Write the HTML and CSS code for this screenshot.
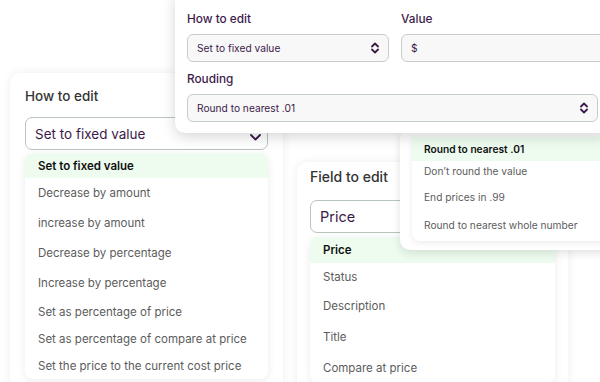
FILE: index.html
```html
<!DOCTYPE html>
<html lang="en">
<head>
  <meta charset="UTF-8">
  <meta name="viewport" content="width=device-width, initial-scale=1.0">
  <title>Bulk price editor</title>
  <link rel="stylesheet" href="styles.css">
</head>
<body>
  <div class="canvas">

    <!-- how to edit card -->
    <div class="card card-how">
      <p class="label">How to edit</p>
      <div class="select">
        <span>Set to fixed value</span>
        <svg class="chev" width="11" height="7" viewBox="0 0 11 7"><polyline points="1,1 5.5,5.5 10,1"/></svg>
      </div>
      <ul class="list">
        <li class="active">Set to fixed value</li>
        <li class="tall">Decrease by amount</li>
        <li class="tall">increase by amount</li>
        <li class="tall">Decrease by percentage</li>
        <li class="tall">Increase by percentage</li>
        <li>Set as percentage of price</li>
        <li>Set as percentage of compare at price</li>
        <li>Set the price to the current cost price</li>
      </ul>
    </div>

    <!-- field card -->
    <div class="card card-field">
      <p class="label">Field to edit</p>
      <div class="select">
        <span>Price</span>
      </div>
      <ul class="list">
        <li class="active">Price</li>
        <li>Status</li>
        <li class="tall">Description</li>
        <li class="tall">Title</li>
        <li class="tall">Compare at price</li>
      </ul>
    </div>

    <!-- rounding dropdown -->
    <div class="card card-round">
      <ul class="list">
        <li class="active">Round to nearest .01</li>
        <li class="short">Don’t round the value</li>
        <li class="tall">End prices in .99</li>
        <li class="last">Round to nearest whole number</li>
      </ul>
    </div>

    <!-- compact form -->
    <div class="card card-form">
      <div class="form-row">
        <div class="field">
          <p class="label">How to edit</p>
          <div class="select">
            <span>Set to fixed value</span>
            <svg class="updown" width="8" height="12" viewBox="0 0 8 12"><polyline points="1,4.5 4,1.5 7,4.5"/><polyline points="1,7.5 4,10.5 7,7.5"/></svg>
          </div>
        </div>
        <div class="field field-value">
          <p class="label">Value</p>
          <div class="select">
            <span>$</span>
          </div>
        </div>
      </div>
      <div class="field">
        <p class="label">Rouding</p>
        <div class="select">
          <span>Round to nearest .01</span>
          <svg class="updown" width="8" height="12" viewBox="0 0 8 12"><polyline points="1,4.5 4,1.5 7,4.5"/><polyline points="1,7.5 4,10.5 7,7.5"/></svg>
        </div>
      </div>
    </div>

  </div>
</body>
</html>
```

FILE: styles.css
```css
* {
  box-sizing: border-box;
}
body {
  font-family: Inter, 'Noto Sans', sans-serif;
  margin: 0;
  padding: 0;
  background-color: #fff;
}
.canvas {
  position: relative;
  width: 600px;
  height: 382px;
  overflow: hidden;
}
p {
  margin: 0;
}
ul {
  list-style: none;
  margin: 0;
  padding: 0;
}
.card {
  position: absolute;
  background-color: #fff;
  border-radius: 10px;
}
.label {
  font-weight: 500;
  color: #333;
}
.select {
  display: flex;
  align-items: center;
  justify-content: space-between;
  border: 1px solid #b9c4bf;
  border-radius: 7px;
  color: #3b1a48;
}
.chev polyline,
.updown polyline {
  fill: none;
  stroke: #3b1a48;
  stroke-width: 1.8;
  stroke-linecap: round;
  stroke-linejoin: round;
}
.list {
  background-color: #fff;
  border-radius: 8px;
  box-shadow: 0 2px 8px rgba(0, 0, 0, 0.08);
  overflow: hidden;
  color: #5c5c5c;
}
.list li {
  display: flex;
  align-items: center;
  height: 27px;
  padding-left: 13px;
  white-space: nowrap;
}
.list li.tall {
  height: 30px;
}
.list li.active {
  height: 25px;
  background-color: #eefcef;
  color: #111;
  font-weight: 600;
}

/* how to edit card */
.card-how {
  left: 10px;
  top: 73px;
  width: 273px;
  height: 330px;
  padding: 14px 15px;
  box-shadow: 0 0 10px rgba(0, 0, 0, 0.07);
  z-index: 1;
}
.card-how .label {
  font-size: 13.5px;
  line-height: 18px;
}
.card-how .select {
  margin-top: 12px;
  height: 33px;
  padding: 0 6px 0 9px;
  font-size: 13.5px;
}
.card-how .chev {
  margin-top: 8px;
}
.card-how .list {
  margin-top: 3px;
  font-size: 11.5px;
}

/* field card */
.card-field {
  left: 297px;
  top: 162px;
  width: 271px;
  height: 240px;
  padding: 6px 13px;
  box-shadow: 0 0 10px rgba(0, 0, 0, 0.07);
  z-index: 2;
}
.card-field .label {
  font-size: 14px;
  line-height: 18px;
}
.card-field .select {
  margin-top: 14px;
  height: 33px;
  padding: 0 9px;
  font-size: 14.5px;
}
.card-field .list {
  margin-top: 4px;
  width: 245px;
  font-size: 11.5px;
}
.card-field .list li {
  height: 27px;
}
.card-field .list li.tall {
  height: 31px;
}
.card-field .list li.active {
  height: 26px;
}

/* rounding dropdown */
.card-round {
  left: 400px;
  top: 128px;
  width: 215px;
  height: 122px;
  padding: 9px 0 12px 12px;
  border-radius: 10px;
  box-shadow: 0 3px 10px rgba(0, 0, 0, 0.12);
  z-index: 3;
}
.card-round .list {
  font-size: 10.2px;
  border-radius: 0 0 0 8px;
  box-shadow: 0 2px 6px rgba(0, 0, 0, 0.08);
}
.card-round .list li {
  padding-left: 12px;
}
.card-round .list li.active {
  height: 24px;
}
.card-round .list li.short {
  height: 20px;
}
.card-round .list li.tall {
  height: 32px;
}
.card-round .list li.last {
  height: 24px;
  margin-bottom: 4px;
}

/* compact form */
.card-form {
  left: 175px;
  top: -10px;
  width: 435px;
  padding: 21px 12px 11px 12px;
  box-shadow: 0 4px 14px rgba(0, 0, 0, 0.16);
  z-index: 4;
}
.form-row {
  display: grid;
  grid-template-columns: 202px 1fr;
  column-gap: 12px;
}
.card-form .label {
  font-size: 11.8px;
  line-height: 16px;
  color: #3d1c4b;
}
.card-form .select {
  margin-top: 7px;
  height: 28px;
  padding: 0 9px;
  font-size: 10.2px;
  background-color: #f8f8f8;
  border-color: #c6cecb;
  border-radius: 6px;
}
.card-form .field-value .select {
  margin-right: -14px;
}
.card-form .form-row + .field {
  margin-top: 9px;
}
```
